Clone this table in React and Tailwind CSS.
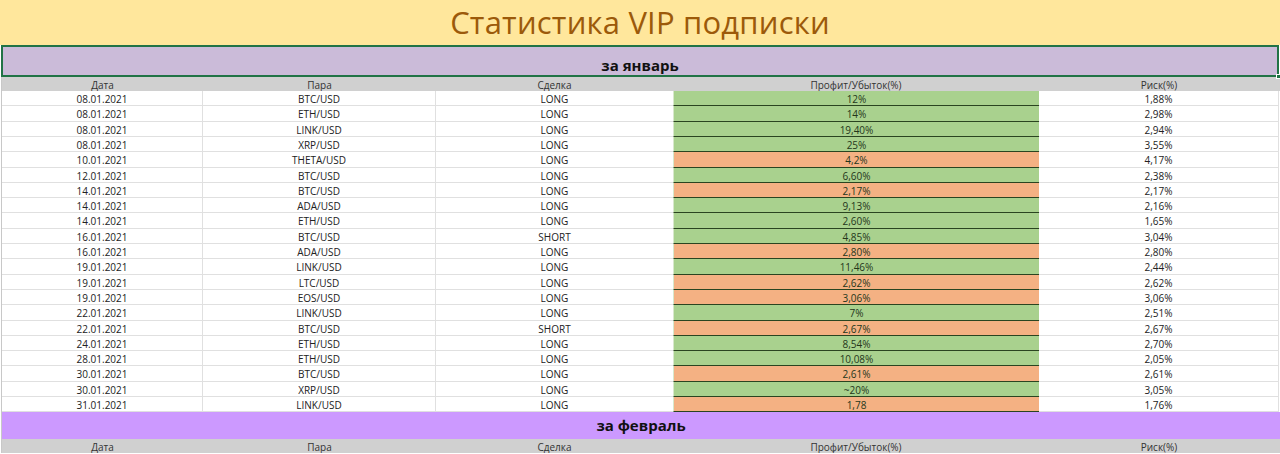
import React from "react";

const rows = [
  ["08.01.2021", "BTC/USD", "LONG", "12%", "g", "1,88%"],
  ["08.01.2021", "ETH/USD", "LONG", "14%", "g", "2,98%"],
  ["08.01.2021", "LINK/USD", "LONG", "19,40%", "g", "2,94%"],
  ["08.01.2021", "XRP/USD", "LONG", "25%", "g", "3,55%"],
  ["10.01.2021", "THETA/USD", "LONG", "4,2%", "o", "4,17%"],
  ["12.01.2021", "BTC/USD", "LONG", "6,60%", "g", "2,38%"],
  ["14.01.2021", "BTC/USD", "LONG", "2,17%", "o", "2,17%"],
  ["14.01.2021", "ADA/USD", "LONG", "9,13%", "g", "2,16%"],
  ["14.01.2021", "ETH/USD", "LONG", "2,60%", "g", "1,65%"],
  ["16.01.2021", "BTC/USD", "SHORT", "4,85%", "g", "3,04%"],
  ["16.01.2021", "ADA/USD", "LONG", "2,80%", "o", "2,80%"],
  ["19.01.2021", "LINK/USD", "LONG", "11,46%", "g", "2,44%"],
  ["19.01.2021", "LTC/USD", "LONG", "2,62%", "o", "2,62%"],
  ["19.01.2021", "EOS/USD", "LONG", "3,06%", "o", "3,06%"],
  ["22.01.2021", "LINK/USD", "LONG", "7%", "g", "2,51%"],
  ["22.01.2021", "BTC/USD", "SHORT", "2,67%", "o", "2,67%"],
  ["24.01.2021", "ETH/USD", "LONG", "8,54%", "g", "2,70%"],
  ["28.01.2021", "ETH/USD", "LONG", "10,08%", "g", "2,05%"],
  ["30.01.2021", "BTC/USD", "LONG", "2,61%", "o", "2,61%"],
  ["30.01.2021", "XRP/USD", "LONG", "~20%", "g", "3,05%"],
  ["31.01.2021", "LINK/USD", "LONG", "1,78", "o", "1,76%"],
];

const cols = "grid grid-cols-[201px_233px_237px_366px_240px] grid-rows-[100%]";
const cell = "flex items-center justify-center pt-[2px] leading-[11px] overflow-hidden";

function HeaderRow() {
  return (
    <div className={`${cols} h-[14px] bg-[#d0d0d0] text-[10px] text-[#333]`}>
      <div className={cell}>Дата</div>
      <div className={cell}>Пара</div>
      <div className={cell}>Сделка</div>
      <div className={cell}>Профит/Убыток(%)</div>
      <div className={cell}>Риск(%)</div>
    </div>
  );
}

export default function App() {
  return (
    <div
      className="w-[1280px] h-[454px] overflow-hidden bg-white text-[#222]"
      style={{ fontFamily: '"Open Sans", "Liberation Sans", sans-serif' }}
    >
      <div className="h-[45px] bg-[#ffe79c] flex items-center justify-center">
        <div className="text-[31px] leading-none text-[#9c5a0a] tracking-[0.2px]">
          Статистика VIP подписки
        </div>
      </div>
      <div className="relative h-[32px] mx-[1px] border-2 border-[#217346] bg-[#cbbbd9] flex items-center justify-center pt-[8px]">
        <div className="text-[15px] font-bold text-[#111] leading-none">за январь</div>
        <div className="absolute right-[-4px] bottom-[-4px] w-[5px] h-[5px] bg-[#217346] border border-white"></div>
      </div>
      <div className="border-l border-[#c8c8c8] ml-[1px]">
        <HeaderRow />
        {rows.map((r, i) => {
          const tall = Math.round(15.3 * (i + 1)) - Math.round(15.3 * i) === 16;
          return (
            <div
              key={i}
              className={`${cols} ${tall ? "h-[16px]" : "h-[15px]"} text-[10px] text-[#222]`}
            >
              <div className={`${cell} border-r border-b border-[#e0e0e0]`}>{r[0]}</div>
              <div className={`${cell} border-r border-b border-[#e0e0e0]`}>{r[1]}</div>
              <div className={`${cell} border-b border-[#e0e0e0]`}>{r[2]}</div>
              <div
                className={`${cell} border-b border-l border-b-[#2a4420] border-l-[#d8e8cc] text-[#24361a] ${
                  r[4] === "g" ? "bg-[#a9d18e]" : "bg-[#f4b183]"
                }`}
              >
                {r[3]}
              </div>
              <div className={`${cell} border-r border-b border-[#e0e0e0]`}>{r[5]}</div>
            </div>
          );
        })}
        <div className="h-[27px] bg-[#cc99ff] flex items-center justify-center">
          <div className="text-[15px] font-bold text-[#111] leading-none">за февраль</div>
        </div>
        <HeaderRow />
      </div>
    </div>
  );
}
